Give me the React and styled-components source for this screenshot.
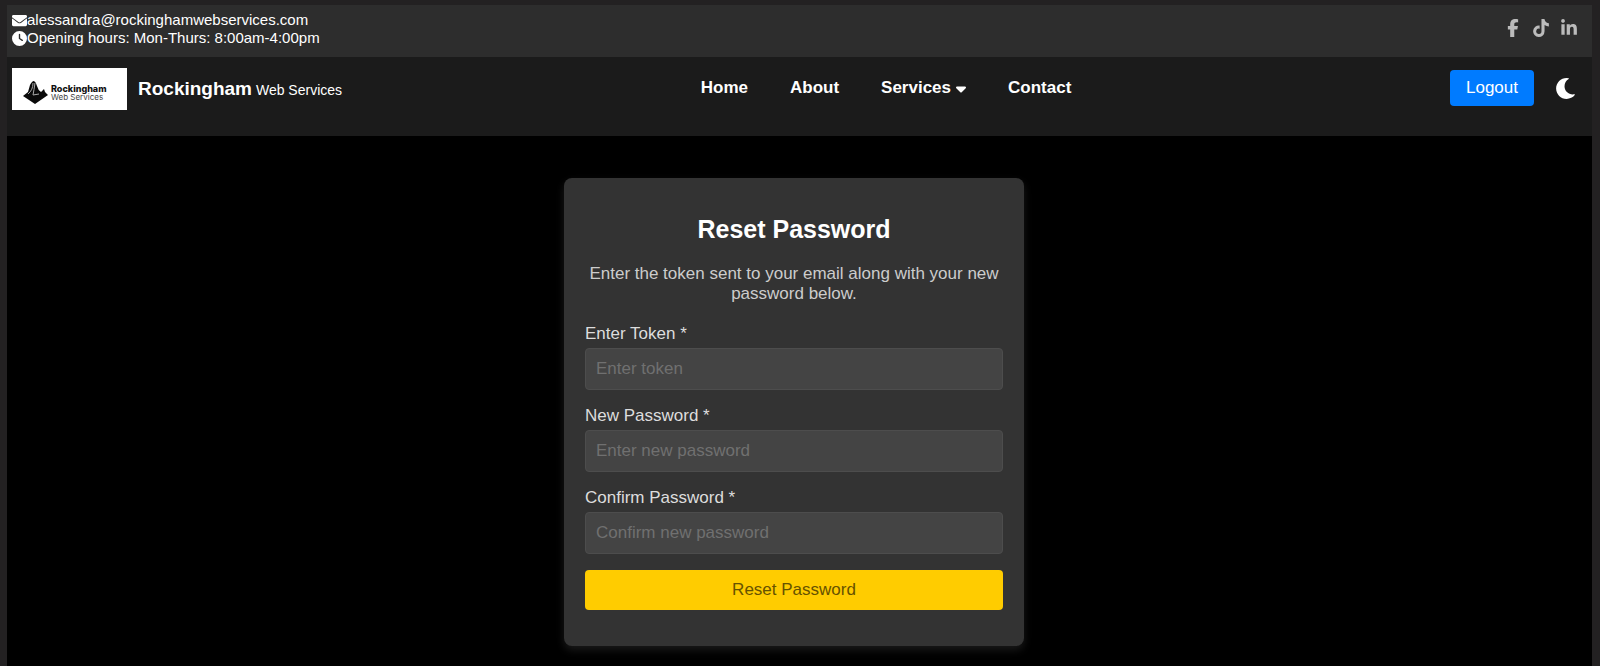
import React from "react";
import styled, { createGlobalStyle } from "styled-components";
import { FaEnvelope, FaTiktok, FaLinkedinIn, FaMoon } from "react-icons/fa";
import { FaCaretDown, FaClock, FaFacebookF } from "react-icons/fa6";

const GlobalStyle = createGlobalStyle`
  *, *::before, *::after { box-sizing: border-box; }
  html { background: #232122; }
  body {
    margin: 0;
    font-family: "Liberation Sans", Arial, sans-serif;
    font-size: 16px;
    color: #fff;
  }
  h1, p { margin: 0; }
  button, input { font: inherit; }
`;

const Page = styled.div`
  display: flex;
  flex-direction: column;
  min-height: 100vh;
  padding: 5px 8px 0 7px;
`;

const TopBar = styled.header`
  display: flex;
  justify-content: space-between;
  align-items: flex-start;
  padding: 6px 14px 10px 5px;
  background: #2d2d2d;
`;

const ContactList = styled.div`
  display: flex;
  flex-direction: column;
  font-size: 15px;
  line-height: 18px;
`;

const ContactItem = styled.div`
  display: flex;
  align-items: center;
`;

const SocialList = styled.div`
  display: flex;
  gap: 10px;
  padding-top: 8px;
`;

const SocialLink = styled.a`
  display: flex;
  justify-content: center;
  width: 18px;
  font-size: 18px;
  color: #bbb;
`;

const NavBar = styled.nav`
  display: flex;
  justify-content: space-between;
  align-items: flex-start;
  padding: 11px 16px 26px 5px;
  background: #1b1b1b;
`;

const Brand = styled.a`
  display: flex;
  align-items: center;
  gap: 11px;
  color: #fff;
  text-decoration: none;
`;

const Logo = styled.span`
  display: flex;
  align-items: center;
  gap: 3px;
  width: 115px;
  height: 42px;
  padding: 8px 0 0 11px;
  background: #fff;
  color: #111;
`;

const LogoText = styled.span`
  display: flex;
  flex-direction: column;
  font-family: Inter, sans-serif;
  font-size: 8px;
  line-height: 9px;
  color: #444;
  strong { font-size: 9px; font-weight: 800; color: #111; }
`;

const BrandName = styled.span`
  font-size: 14px;
  line-height: 24px;
  strong { font-size: 19px; }
`;

const Menu = styled.div`
  display: flex;
  gap: 42px;
  padding: 10px 20px 0 0;
`;

const MenuLink = styled.a`
  display: flex;
  align-items: center;
  gap: 5px;
  font-size: 17px;
  font-weight: bold;
  line-height: 20px;
  color: #fff;
  text-decoration: none;
  svg { width: 10px; }
`;

const Actions = styled.div`
  display: flex;
  justify-content: flex-end;
  align-items: center;
  gap: 21px;
  padding-top: 2px;
`;

const LogoutButton = styled.button`
  padding: 8px 16px;
  border: 0;
  border-radius: 4px;
  background: #007bff;
  color: #fff;
  font-size: 17px;
  line-height: 20px;
`;

const ThemeButton = styled.button`
  display: flex;
  padding: 0;
  border: 0;
  background: none;
  color: #fff;
  font-size: 21px;
`;

const Main = styled.main`
  flex: 1;
  display: flex;
  justify-content: center;
  align-items: flex-start;
  padding: 42px 11px 19px 0;
  background: #000;
`;

const Card = styled.form`
  display: flex;
  flex-direction: column;
  width: 460px;
  max-width: 100%;
  padding: 36px 21px;
  border-radius: 8px;
  background: #333;
  box-shadow: 0 4px 8px rgba(255, 255, 255, 0.1);
`;

const Title = styled.h1`
  margin-bottom: 20px;
  font-size: 25px;
  line-height: 30px;
  text-align: center;
`;

const Intro = styled.p`
  margin-bottom: 20px;
  font-size: 17px;
  line-height: 20px;
  text-align: center;
  color: #ccc;
`;

const Label = styled.label`
  margin-bottom: 4px;
  font-size: 17px;
  line-height: 20px;
  color: #ddd;
`;

const TextInput = styled.input`
  width: 100%;
  height: 42px;
  margin-bottom: 16px;
  padding: 0 10px;
  border: 1px solid #4d4d4d;
  border-radius: 4px;
  background: #444;
  color: #fff;
  font-size: 17px;
  &::placeholder { color: #707070; opacity: 1; }
`;

const SubmitButton = styled.button`
  height: 40px;
  border: 0;
  border-radius: 4px;
  background: #fc0;
  color: #665200;
  font-size: 17px;
`;

const fields = [
  { id: "token", label: "Enter Token *", placeholder: "Enter token", type: "text" },
  { id: "new-password", label: "New Password *", placeholder: "Enter new password", type: "password" },
  { id: "confirm-password", label: "Confirm Password *", placeholder: "Confirm new password", type: "password" },
];

function LogoMark() {
  return (
    <svg width="25" height="24" viewBox="0 0 25 24" aria-hidden="true">
      <path d="M0 15 L5 11 L7 4 Q9 0 11 0 Q13 1 14 5 Q15 9 18 11 L21 8 L22 11 L25 14 L12 23 Z" fill="#0a0a0a" />
      <path d="M10 2 Q10 9 5 13 M12 2 Q11 9 10 14 L16 13" fill="none" stroke="#aaa" strokeWidth="1" />
    </svg>
  );
}

export default function App() {
  return (
    <Page>
      <GlobalStyle />
      <TopBar>
        <ContactList>
          <ContactItem><FaEnvelope />alessandra@rockinghamwebservices.com</ContactItem>
          <ContactItem><FaClock />Opening hours: Mon-Thurs: 8:00am-4:00pm</ContactItem>
        </ContactList>
        <SocialList>
          <SocialLink href="#facebook" aria-label="Facebook"><FaFacebookF /></SocialLink>
          <SocialLink href="#tiktok" aria-label="TikTok"><FaTiktok /></SocialLink>
          <SocialLink href="#linkedin" aria-label="LinkedIn"><FaLinkedinIn /></SocialLink>
        </SocialList>
      </TopBar>
      <NavBar>
        <Brand href="#home">
          <Logo>
            <LogoMark />
            <LogoText><strong>Rockingham</strong><span>Web Services</span></LogoText>
          </Logo>
          <BrandName><strong>Rockingham</strong> Web Services</BrandName>
        </Brand>
        <Menu>
          <MenuLink href="#home">Home</MenuLink>
          <MenuLink href="#about">About</MenuLink>
          <MenuLink href="#services">Services<FaCaretDown /></MenuLink>
          <MenuLink href="#contact">Contact</MenuLink>
        </Menu>
        <Actions>
          <LogoutButton type="button">Logout</LogoutButton>
          <ThemeButton type="button" aria-label="Toggle theme"><FaMoon /></ThemeButton>
        </Actions>
      </NavBar>
      <Main>
        <Card>
          <Title>Reset Password</Title>
          <Intro>Enter the token sent to your email along with your new password below.</Intro>
          {fields.map((f) => (
            <React.Fragment key={f.id}>
              <Label htmlFor={f.id}>{f.label}</Label>
              <TextInput id={f.id} type={f.type} placeholder={f.placeholder} />
            </React.Fragment>
          ))}
          <SubmitButton type="button">Reset Password</SubmitButton>
        </Card>
      </Main>
    </Page>
  );
}
